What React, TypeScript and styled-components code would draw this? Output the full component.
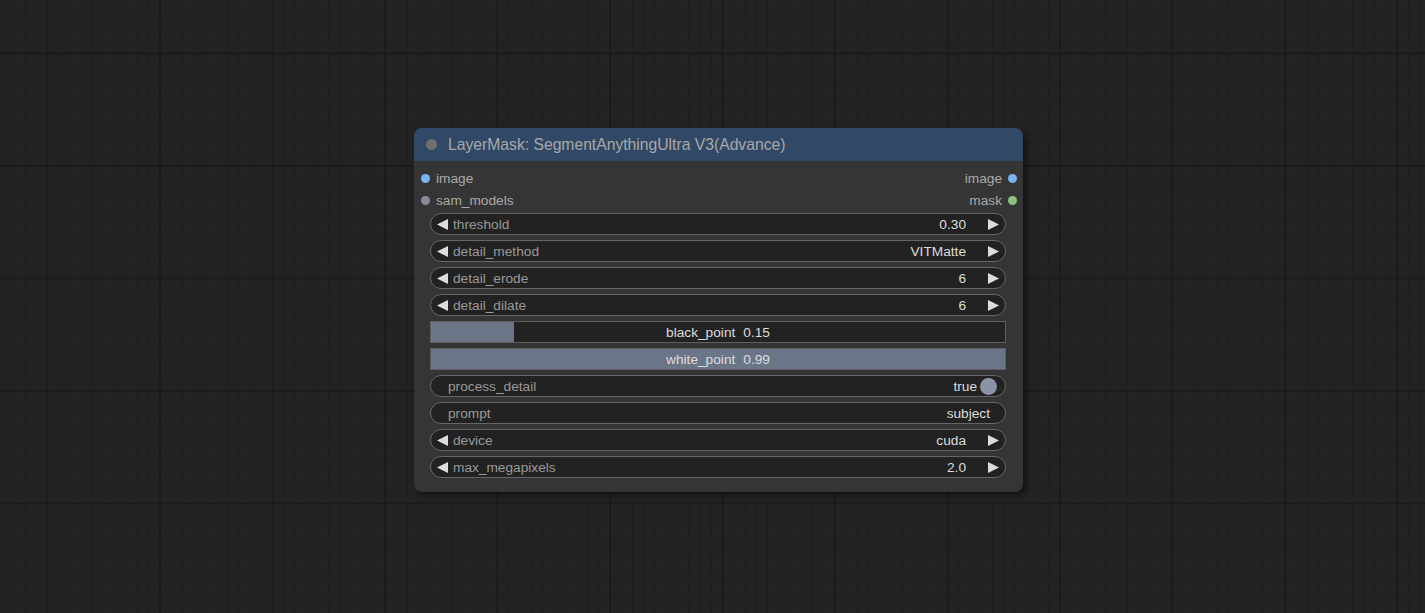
import styled, { createGlobalStyle } from 'styled-components';

const GlobalStyle = createGlobalStyle`
  html, body {
    margin: 0;
    padding: 0;
    height: 100%;
  }
  body {
    font-family: "Liberation Sans", Arial, sans-serif;
    background: #232323;
    overflow: hidden;
  }
`;

const Canvas = styled.div`
  position: relative;
  width: 100vw;
  height: 100vh;
  background-color: #232323;
  background-image:
    linear-gradient(to right, #1b1b1b 2px, transparent 2px),
    linear-gradient(to bottom, #1b1b1b 2px, transparent 2px),
    linear-gradient(to right, #1e1e1e 1px, transparent 1px),
    linear-gradient(to bottom, #1e1e1e 1px, transparent 1px);
  background-size: 112.5px 100%, 100% 112.5px, 11.25px 100%, 100% 11.25px;
  background-position: 46.5px 0, 0 52.5px, 2px 0, 0 7.7px;
`;

const Node = styled.div`
  position: absolute;
  left: 414px;
  top: 128px;
  width: 609px;
  background: #353535;
  border-radius: 8px;
  box-shadow: 3px 3px 6px rgba(0, 0, 0, 0.5);
  overflow: hidden;
`;

const TitleBar = styled.div`
  height: 33px;
  display: flex;
  align-items: center;
  background: #314866;
  padding-left: 12px;
  gap: 11px;
`;

const TitleDot = styled.span`
  width: 11px;
  height: 11px;
  border-radius: 50%;
  background: #6f6f6f;
`;

const Title = styled.span`
  color: #a8a8a8;
  font-size: 15.7px;
`;

const Slots = styled.div`
  padding: 6px 0 2px;
`;

const SlotRow = styled.div`
  height: 22px;
  display: flex;
  align-items: center;
  justify-content: space-between;
`;

const Slot = styled.div<{ $side: 'in' | 'out' }>`
  display: flex;
  align-items: center;
  gap: 6px;
  flex-direction: ${(p) => (p.$side === 'in' ? 'row' : 'row-reverse')};
  padding: ${(p) => (p.$side === 'in' ? '0 0 0 7px' : '0 6px 0 0')};
  color: #aaa;
  font-size: 13.7px;
`;

const SlotDot = styled.span<{ $color: string }>`
  width: 9px;
  height: 9px;
  border-radius: 50%;
  background: ${(p) => p.$color};
`;

const Widgets = styled.div`
  display: flex;
  flex-direction: column;
  gap: 5px;
  padding: 0 17px 14px 16px;
`;

const Pill = styled.div<{ $pad: string }>`
  height: 22px;
  box-sizing: border-box;
  display: flex;
  align-items: center;
  background: #222;
  border: 1px solid #666;
  border-radius: 11px;
  padding: ${(p) => p.$pad};
  font-size: 13.7px;
`;

const Label = styled.span<{ $indent?: number }>`
  flex: 1;
  color: #999;
  margin-left: ${(p) => p.$indent ?? 0}px;
  white-space: nowrap;
`;

const Value = styled.span<{ $gap?: number }>`
  color: #ddd;
  margin-right: ${(p) => p.$gap ?? 0}px;
  white-space: nowrap;
`;

const ArrowIcon = styled.svg`
  width: 11px;
  height: 11px;
  flex: none;
  fill: #ddd;
`;

const Knob = styled.span`
  width: 17px;
  height: 17px;
  border-radius: 50%;
  background: #8a94a6;
  margin-left: 3px;
`;

const SliderBar = styled.div`
  position: relative;
  height: 22px;
  box-sizing: border-box;
  background: #222;
  border: 1px solid #5f5f5f;
  display: flex;
  align-items: center;
  justify-content: center;
  gap: 8px;
  font-size: 13.7px;
  color: #ddd;
`;

const SliderFill = styled.div`
  position: absolute;
  left: 0;
  top: 0;
  bottom: 0;
  background: #6b7588;
`;

const SliderText = styled.span`
  position: relative;
`;

const Arrow = ({ dir }: { dir: 'left' | 'right' }) => (
  <ArrowIcon viewBox="0 0 11 11">
    {dir === 'left' ? <polygon points="11,0 11,11 0,5.5" /> : <polygon points="0,0 0,11 11,5.5" />}
  </ArrowIcon>
);

const Combo = ({ label, value }: { label: string; value: string }) => (
  <Pill $pad="0 6px 0 6px">
    <Arrow dir="left" />
    <Label $indent={5}>{label}</Label>
    <Value $gap={22}>{value}</Value>
    <Arrow dir="right" />
  </Pill>
);

const Slider = ({ label, value, min, max }: { label: string; value: number; min: number; max: number }) => (
  <SliderBar>
    <SliderFill style={{ width: `${((value - min) / (max - min)) * 100}%` }} />
    <SliderText>{label}</SliderText>
    <SliderText>{value.toFixed(2)}</SliderText>
  </SliderBar>
);

const Toggle = ({ label, value }: { label: string; value: boolean }) => (
  <Pill $pad="0 8px 0 17px">
    <Label>{label}</Label>
    <Value>{String(value)}</Value>
    <Knob />
  </Pill>
);

const TextField = ({ label, value }: { label: string; value: string }) => (
  <Pill $pad="0 15px 0 17px">
    <Label>{label}</Label>
    <Value>{value}</Value>
  </Pill>
);

export default function App() {
  return (
    <>
      <GlobalStyle />
      <Canvas>
        <Node>
          <TitleBar>
            <TitleDot />
            <Title>LayerMask: SegmentAnythingUltra V3(Advance)</Title>
          </TitleBar>
          <Slots>
            <SlotRow>
              <Slot $side="in">
                <SlotDot $color="#7ab2f2" />
                image
              </Slot>
              <Slot $side="out">
                <SlotDot $color="#7ab2f2" />
                image
              </Slot>
            </SlotRow>
            <SlotRow>
              <Slot $side="in">
                <SlotDot $color="#8a8a96" />
                sam_models
              </Slot>
              <Slot $side="out">
                <SlotDot $color="#8cc47e" />
                mask
              </Slot>
            </SlotRow>
          </Slots>
          <Widgets>
            <Combo label="threshold" value="0.30" />
            <Combo label="detail_method" value="VITMatte" />
            <Combo label="detail_erode" value="6" />
            <Combo label="detail_dilate" value="6" />
            <Slider label="black_point" value={0.15} min={0.01} max={0.98} />
            <Slider label="white_point" value={0.99} min={0.02} max={0.99} />
            <Toggle label="process_detail" value={true} />
            <TextField label="prompt" value="subject" />
            <Combo label="device" value="cuda" />
            <Combo label="max_megapixels" value="2.0" />
          </Widgets>
        </Node>
      </Canvas>
    </>
  );
}
